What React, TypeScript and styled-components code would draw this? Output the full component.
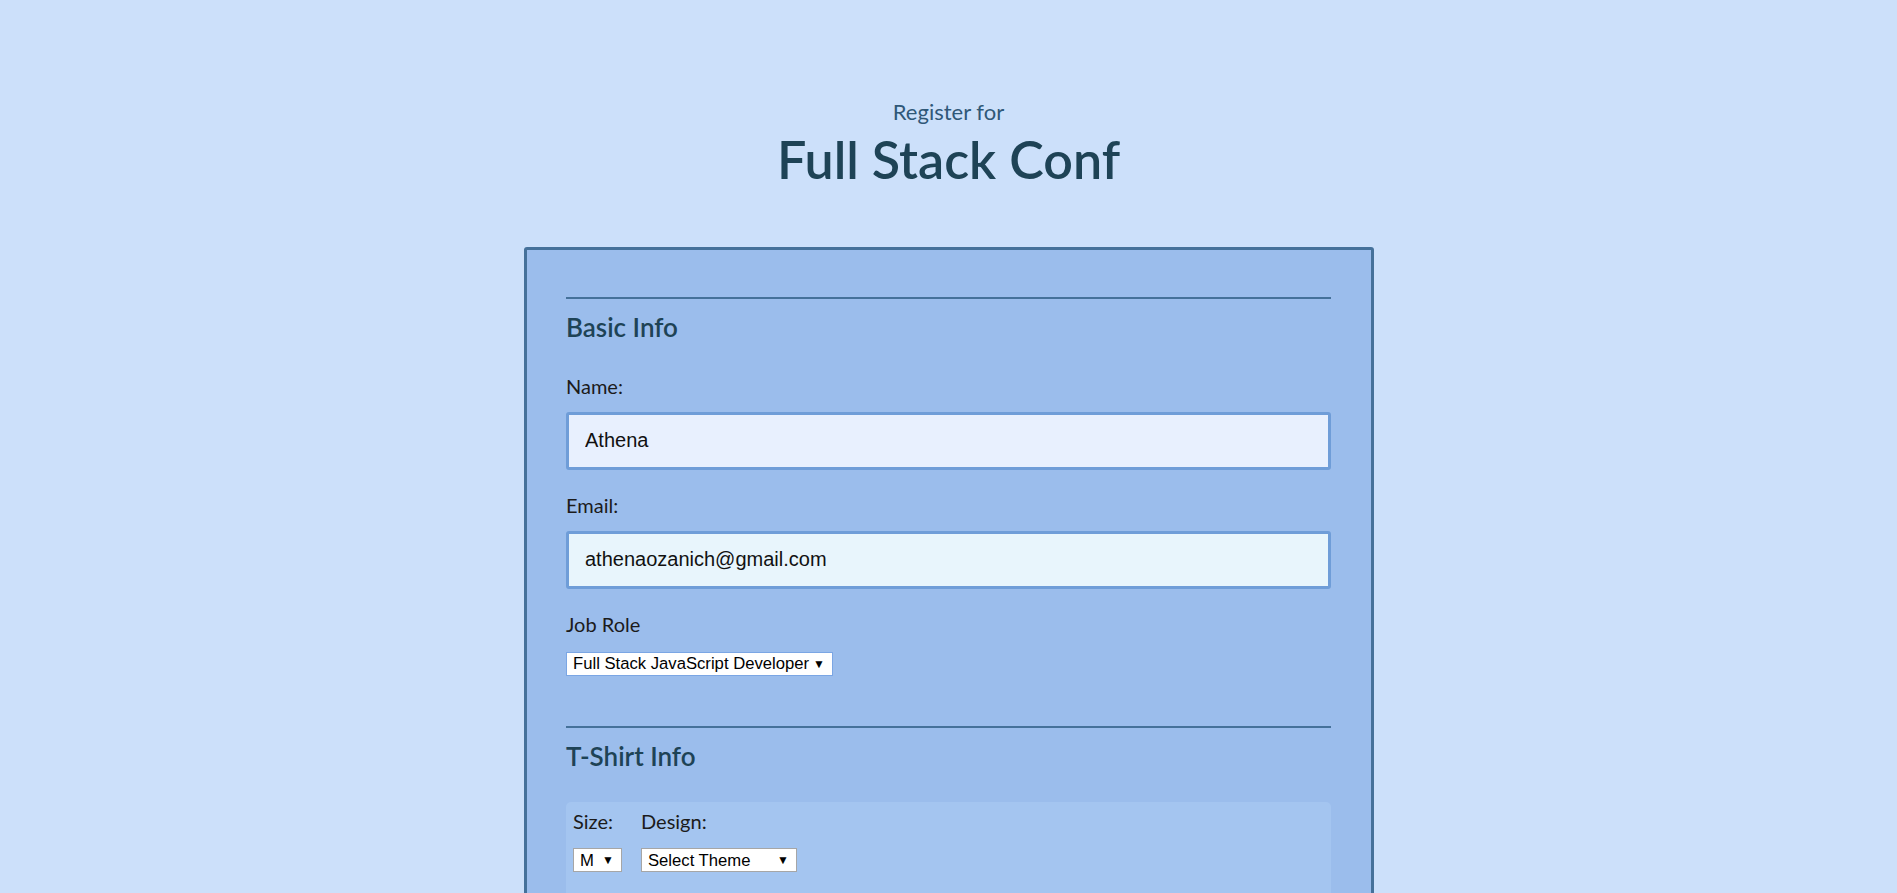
import * as React from "react";
import styled, { createGlobalStyle } from "styled-components";

const colours = {
  page: "#cce0fa",
  card: "#9bbdec",
  cardBorder: "#45719a",
  shirtBox: "#a4c5f0",
  title: "#1e4356",
  subtitle: "#2f5878",
  label: "#1b1b1b",
  inputBorder: "#6f9dd8",
};

const headFont = `"Lato", "Noto Sans", sans-serif`;
const fieldFont = `"Liberation Sans", Arial, sans-serif`;

const GlobalStyle = createGlobalStyle`
  body {
    margin: 0;
    background: ${colours.page};
    font-family: ${headFont};
  }
`;

const Page = styled.div`
  padding-top: 99px;
  padding-bottom: 60px;
`;

const Header = styled.header`
  text-align: center;
  margin-bottom: 56px;
`;

const Kicker = styled.p`
  margin: 0 0 3px;
  font-size: 22px;
  line-height: 1.2;
  color: ${colours.subtitle};
`;

const Title = styled.h1`
  margin: 0;
  font-size: 52px;
  line-height: 1.2;
  font-weight: 600;
  color: ${colours.title};
`;

const Card = styled.form`
  box-sizing: border-box;
  width: 850px;
  margin: 0 auto;
  padding: 47px 0 40px;
  background: ${colours.card};
  border: 3px solid ${colours.cardBorder};
  border-radius: 3px;
`;

const Section = styled.section`
  width: 765px;
  margin: 0 auto 50px;
  padding-top: 13px;
  border-top: 2px solid ${colours.cardBorder};
`;

const SectionHeading = styled.h2`
  margin: 0 0 32px;
  font-size: 26px;
  line-height: 1.2;
  font-weight: 600;
  color: ${colours.title};
`;

const Field = styled.div`
  display: flex;
  flex-direction: column;
  margin-bottom: 24px;
`;

const Label = styled.label<{ $gap?: number }>`
  font-size: 20px;
  line-height: 1.15;
  color: ${colours.label};
  margin-bottom: ${(p) => p.$gap ?? 14}px;
`;

const TextInput = styled.input<{ $tint: string }>`
  box-sizing: border-box;
  width: 100%;
  height: 58px;
  padding: 0 16px;
  font-family: ${fieldFont};
  font-size: 20px;
  color: #111;
  background: ${(p) => p.$tint};
  border: 3px solid ${colours.inputBorder};
  border-radius: 3px;
  outline: none;
`;

const SelectWrap = styled.span<{ $width: number }>`
  position: relative;
  display: inline-block;
  width: ${(p) => p.$width}px;

  &::after {
    content: "▼";
    position: absolute;
    right: 8px;
    top: 50%;
    transform: translateY(-50%);
    font-family: ${fieldFont};
    font-size: 12px;
    color: #000;
    pointer-events: none;
  }
`;

const Select = styled.select<{ $active?: boolean }>`
  appearance: none;
  box-sizing: border-box;
  width: 100%;
  height: 24px;
  padding: 0 20px 0 6px;
  font-family: ${fieldFont};
  font-size: 16.67px;
  color: #000;
  background: #fff;
  border: 1px solid ${(p) => (p.$active ? "#7ba6e4" : "#a6a6a6")};
  border-radius: 0;
  outline: none;
`;

const ShirtBox = styled.div`
  display: flex;
  gap: 19px;
  padding: 8px 7px 48px;
  background: ${colours.shirtBox};
  border-radius: 5px;
  margin-top: -2px;
`;

const ShirtColumn = styled.div`
  display: flex;
  flex-direction: column;
  align-items: flex-start;
`;

const ActivityList = styled.div`
  display: flex;
  flex-direction: column;
  gap: 10px;
  font-size: 19px;
  color: ${colours.label};
`;

const activities = [
  "Main Conference — $200",
  "JavaScript Frameworks Workshop — Tuesday 9am-12pm, $100",
  "JavaScript Libraries Workshop — Tuesday 1pm-4pm, $100",
  "Express Workshop — Tuesday 9am-12pm, $100",
  "Node.js Workshop — Tuesday 1pm-4pm, $100",
];

export default function App() {
  return (
    <Page>
      <GlobalStyle />
      <Header>
        <Kicker>Register for</Kicker>
        <Title>Full Stack Conf</Title>
      </Header>

      <Card onSubmit={(e) => e.preventDefault()}>
        <Section>
          <SectionHeading>Basic Info</SectionHeading>
          <Field>
            <Label htmlFor="name">Name:</Label>
            <TextInput id="name" $tint="#e8f0fe" defaultValue="Athena" />
          </Field>
          <Field>
            <Label htmlFor="email">Email:</Label>
            <TextInput
              id="email"
              $tint="#e8f5fc"
              defaultValue="athenaozanich@gmail.com"
            />
          </Field>
          <Field>
            <Label htmlFor="title" $gap={16}>
              Job Role
            </Label>
            <div>
              <SelectWrap $width={267}>
                <Select id="title" $active defaultValue="fullstack">
                  <option value="fullstack">Full Stack JavaScript Developer</option>
                  <option value="frontend">Front End Developer</option>
                  <option value="backend">Back End Developer</option>
                  <option value="designer">Designer</option>
                  <option value="other">Other</option>
                </Select>
              </SelectWrap>
            </div>
          </Field>
        </Section>

        <Section>
          <SectionHeading>T-Shirt Info</SectionHeading>
          <ShirtBox>
            <ShirtColumn>
              <Label htmlFor="size" $gap={15}>
                Size:
              </Label>
              <SelectWrap $width={49}>
                <Select id="size" defaultValue="medium">
                  <option value="small">S</option>
                  <option value="medium">M</option>
                  <option value="large">L</option>
                  <option value="xlarge">XL</option>
                </Select>
              </SelectWrap>
            </ShirtColumn>
            <ShirtColumn>
              <Label htmlFor="design" $gap={15}>
                Design:
              </Label>
              <SelectWrap $width={156}>
                <Select id="design" defaultValue="">
                  <option value="">Select Theme</option>
                  <option value="js puns">Theme - JS Puns</option>
                  <option value="heart js">Theme - I ♥ JS</option>
                </Select>
              </SelectWrap>
            </ShirtColumn>
          </ShirtBox>
        </Section>

        <Section>
          <SectionHeading>Register for Activities</SectionHeading>
          <ActivityList>
            {activities.map((a) => (
              <label key={a}>
                <input type="checkbox" /> {a}
              </label>
            ))}
          </ActivityList>
        </Section>
      </Card>
    </Page>
  );
}
